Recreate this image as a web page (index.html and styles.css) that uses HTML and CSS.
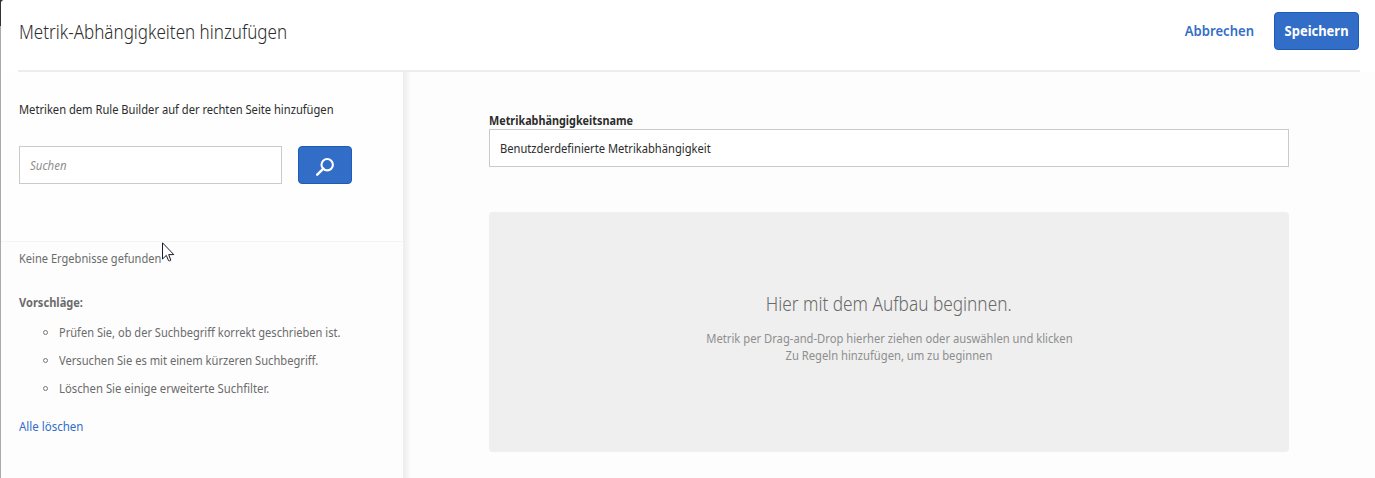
FILE: index.html
```html
<!DOCTYPE html>
<html lang="de">
<head>
<meta charset="utf-8">
<title>Metrik-Abhängigkeiten hinzufügen</title>
<link rel="stylesheet" href="styles.css">
</head>
<body>
<div class="dialog">
  <header class="header">
    <h1 class="title"><span class="t-title">Metrik-Abhängigkeiten hinzufügen</span></h1>
    <div class="actions">
      <button class="cancel"><span class="t-cancel">Abbrechen</span></button>
      <button class="save"><span class="t-save">Speichern</span></button>
    </div>
  </header>
  <div class="columns">
    <aside class="sidebar">
      <section class="search-area">
        <p class="intro"><span class="t-intro">Metriken dem Rule Builder auf der rechten Seite hinzufügen</span></p>
        <div class="search-row">
          <div class="search-field"><span class="t-search">Suchen</span></div>
          <button class="search-button" aria-label="Suchen">
            <svg width="20" height="20" viewBox="0 0 20 20"><circle cx="12.2" cy="7.7" r="5.7" fill="none" stroke="#fff" stroke-width="2.1"/><path d="M8.4 11.6 2.2 17.6" stroke="#fff" stroke-width="2.5" stroke-linecap="round"/></svg>
          </button>
        </div>
      </section>
      <section class="results">
        <p class="none"><span class="t-none">Keine Ergebnisse gefunden</span></p>
        <p class="tips-title"><span class="t-tips">Vorschläge:</span></p>
        <ul class="tips">
          <li><span class="t-tip1">Prüfen Sie, ob der Suchbegriff korrekt geschrieben ist.</span></li>
          <li><span class="t-tip2">Versuchen Sie es mit einem kürzeren Suchbegriff.</span></li>
          <li><span class="t-tip3">Löschen Sie einige erweiterte Suchfilter.</span></li>
        </ul>
        <a class="clear"><span class="t-clear">Alle löschen</span></a>
      </section>
    </aside>
    <main class="builder">
      <label class="name-label"><span class="t-label">Metrikabhängigkeitsname</span></label>
      <div class="name-field"><span class="t-name">Benutzderdefinierte Metrikabhängigkeit</span></div>
      <div class="dropzone">
        <h2 class="drop-title"><span class="t-drop">Hier mit dem Aufbau beginnen.</span></h2>
        <p class="drop-text"><span class="t-line1">Metrik per Drag-and-Drop hierher ziehen oder auswählen und klicken</span><br><span class="t-line2">Zu Regeln hinzufügen, um zu beginnen</span></p>
      </div>
    </main>
  </div>
</div>
<svg class="cursor" width="13" height="20" viewBox="0 0 13 20"><path d="M.5 .8V17L4.3 13.4 6.5 18.6Q7.5 19.3 8.8 18.2L6.7 12.6H11.8Z" fill="#fff" stroke="#1b1b2b" stroke-width="1"/></svg>
</body>
</html>
```
FILE: styles.css
```css
*, *::before { box-sizing: border-box; }
body {
  margin: 0;
  height: 478px;
  overflow: hidden;
  background: linear-gradient(#333 0 26px, #aaa 26px);
  font-family: "Noto Sans", sans-serif;
  font-size: 13px;
  color: #2c2c2c;
}
h1, h2, p, ul { margin: 0; padding: 0; font-weight: inherit; }
button { padding: 0; border: 0; background: none; font: inherit; }
/* Condensed lettering: each run is narrowed horizontally */
span { display: inline-block; white-space: nowrap; transform-origin: 0 50%; transform: scaleX(.858); }
.t-title { transform: scaleX(.852); }
.t-search { transform: scaleX(.88); }
.t-none, .t-tips, .t-tip1 { transform: scaleX(.852); }
.t-tip3 { transform: scaleX(.87); }
.t-clear { transform: scaleX(.885); }
.t-label { transform: scaleX(.832); }
.t-cancel { transform-origin: 100% 50%; transform: scaleX(.935); }
.t-save { transform-origin: 50% 50%; transform: scaleX(.925); }
.t-drop, .t-line1, .t-line2 { transform-origin: 50% 50%; transform: scaleX(.862); }
.dialog {
  height: 478px;
  margin-left: 1px;
  border-radius: 4px 0 0 0;
  background: #fdfdfd;
  overflow: hidden;
}
.header {
  height: 72px;
  padding: 0 16px 0 18px;
  display: flex;
  justify-content: space-between;
  background: linear-gradient(#ededed, #ededed) 17px 70px / 1342px 2px no-repeat #fff;
}
.title { padding-top: 18px; font-size: 20px; line-height: 28px; font-weight: 300; }
.actions { display: flex; gap: 20px; padding-top: 12px; font-size: 14px; font-weight: 700; }
.cancel { height: 38px; padding-bottom: 2px; color: #326ec8; font-weight: 600; }
.save { width: 85px; height: 38px; padding-bottom: 2px; border: 1px solid #1c5cb8; border-radius: 4px; background: #326ec8; color: #fff; font-weight: 700; display: flex; align-items: center; justify-content: center; }
.columns { display: flex; height: 406px; }
.sidebar { width: 402px; flex: none; }
.search-area { height: 170px; padding: 27px 0 0 18px; background: #fefefe; border-bottom: 1px solid #f4f4f4; }
.intro { height: 47px; line-height: 20px; }
.search-row { display: flex; gap: 16px; }
.search-field { width: 263px; height: 38px; padding-left: 10px; border: 1px solid #cacaca; background: #fff; line-height: 36px; font-style: italic; color: #8e8e8e; }
.search-button { width: 54px; height: 38px; border: 1px solid #1c5cb8; border-radius: 4px; background: #326ec8; display: flex; align-items: center; justify-content: center; padding-top: 4px; }
.results { padding: 6px 0 0 18px; color: #6b6b6b; }
.none { height: 44px; line-height: 20px; }
.tips-title { height: 26px; line-height: 20px; font-weight: 700; }
.tips { list-style: none; }
.tips li { height: 28px; line-height: 28px; display: flex; align-items: center; padding-left: 24px; }
.tips li::before { content: ""; width: 5px; height: 5px; flex: none; margin: 1px 11px 0 0; border: 1px solid #777; border-radius: 50%; }
.clear { display: block; margin-top: 14px; line-height: 20px; color: #326ec8; }
.builder { flex: 1; padding: 38px 0 0 86px; background: linear-gradient(90deg, #ededed, #f4f4f4 4px, #fdfdfd 8px) no-repeat; }
.name-label { display: block; height: 19px; line-height: 20px; font-weight: 700; }
.name-field { width: 800px; height: 38px; padding-left: 10px; border: 1px solid #cacaca; background: #fff; line-height: 36px; }
.dropzone { width: 800px; height: 240px; margin-top: 45px; padding-top: 78px; border-radius: 4px; background: #efefef; text-align: center; }
.drop-title { height: 40px; line-height: 28px; font-size: 20px; font-weight: 300; color: #696969; }
.drop-text { line-height: 17px; color: #8e8e8e; }
.cursor { position: absolute; left: 162px; top: 242px; }
```
